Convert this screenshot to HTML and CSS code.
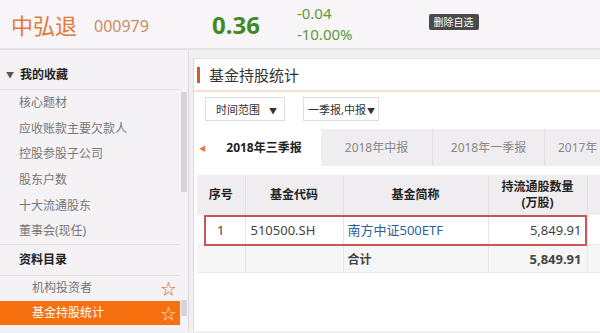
FILE: index.html
```html
<!DOCTYPE html>
<html lang="zh">
<head>
    <meta charset="UTF-8">
    <title>中弘退 基金持股统计</title>
    <link rel="stylesheet" href="styles.css">
</head>
<body>
    <div class="header">
        <span class="stock-name">中弘退</span>
        <span class="stock-code">000979</span>
        <span class="price">0.36</span>
        <div class="change">
            <span>-0.04</span>
            <span>-10.00%</span>
        </div>
        <button class="btn-del" type="button">删除自选</button>
    </div>

    <div class="layout">
        <div class="sidebar">
            <div class="menu">
                <div class="menu-head"><span class="caret">&#9660;</span>我的收藏</div>
                <div class="menu-item">核心题材</div>
                <div class="menu-item">应收账款主要欠款人</div>
                <div class="menu-item">控股参股子公司</div>
                <div class="menu-item">股东户数</div>
                <div class="menu-item">十大流通股东</div>
                <div class="menu-item">董事会(现任)</div>
                <div class="menu-group">资料目录</div>
                <div class="menu-sub">机构投资者<span class="star">&#9734;</span></div>
                <div class="menu-sub active">基金持股统计<span class="star">&#9734;</span></div>
            </div>
            <div class="scroll"><div class="thumb"></div><div class="thumb-low"></div></div>
        </div>

        <div class="main">
            <div class="title">基金持股统计</div>

            <div class="filters">
                <div class="select wide">时间范围 <span class="arrow">&#9660;</span></div>
                <div class="select">一季报,中报<span class="arrow">&#9660;</span></div>
            </div>

            <div class="tabs">
                <span class="tab-prev">&#9664;</span>
                <div class="tab active">2018年三季报</div>
                <div class="tab">2018年中报</div>
                <div class="tab">2018年一季报</div>
                <div class="tab last">2017年</div>
            </div>

            <div class="table-wrap">
                <table class="grid">
                    <colgroup>
                        <col style="width: 48px">
                        <col style="width: 98px">
                        <col style="width: 145px">
                        <col style="width: 99px">
                        <col style="width: 20px">
                    </colgroup>
                    <tr class="head">
                        <th class="c-no">序号</th>
                        <th class="c-code">基金代码</th>
                        <th class="c-name">基金简称</th>
                        <th class="c-num"><span class="th-line">持流通股数量</span><span class="th-line">(万股)</span></th>
                        <th class="c-more"></th>
                    </tr>
                    <tr class="row">
                        <td class="c-no">1</td>
                        <td class="c-code">510500.SH</td>
                        <td class="c-name"><span class="link">南方中证500ETF</span></td>
                        <td class="c-num">5,849.91</td>
                        <td class="c-more"></td>
                    </tr>
                    <tr class="row total">
                        <td class="c-no"></td>
                        <td class="c-code"></td>
                        <td class="c-name">合计</td>
                        <td class="c-num">5,849.91</td>
                        <td class="c-more"></td>
                    </tr>
                </table>
                <div class="mark"></div>
            </div>
        </div>
    </div>
</body>
</html>
```

FILE: styles.css
```css
body{
    margin: 0;
    width: 600px;
    height: 333px;
    overflow: hidden;
    background: #f1eff1;
    font-family: "Noto Sans", "Noto Sans CJK SC", sans-serif;
    color: #333;
}

/*****
header
******/
.header{
    height: 50px;
    display: flex;
    align-items: center;
    background: #f7f5f7;
    border-bottom: 2px solid #e3e1e3;
    box-sizing: border-box;
}

.stock-name{
    margin-left: 11px;
    font-size: 22px;
    color: #e07c3c;
}

.stock-code{
    margin-left: 17px;
    margin-top: 3px;
    font-size: 16px;
    color: #c98d62;
}

.price{
    margin-left: 63px;
    font-size: 24px;
    font-weight: bold;
    color: #3f8a22;
}

.change{
    margin-left: 37px;
    display: flex;
    flex-direction: column;
    font-size: 15px;
    line-height: 21px;
    color: #5a9a3a;
}

.btn-del{
    margin-left: 76px;
    margin-bottom: 4px;
    height: 16px;
    padding: 0 5px;
    border: none;
    border-radius: 2px;
    background: #4a4a4a;
    color: #fff;
    font-family: inherit;
    font-size: 10px;
    line-height: 16px;
}

/*****
layout
******/
.layout{
    display: flex;
    height: 281px;
}

.sidebar{
    width: 189px;
    display: flex;
    background: #f4f2f4;
    border-right: 1px solid #dcdadc;
    box-sizing: border-box;
    padding-top: 11px;
}

.menu{
    width: 181px;
}

.menu-head{
    height: 28px;
    line-height: 28px;
    font-size: 12px;
    font-weight: bold;
    color: #222;
    border-bottom: 1px solid #e2e0e2;
}

.caret{
    display: inline-block;
    margin: 0 6px;
    font-size: 8px;
    color: #555;
    vertical-align: 1px;
}

.menu-item{
    height: 25.7px;
    line-height: 25.7px;
    padding-left: 19px;
    font-size: 12px;
    color: #777;
}

.menu-group{
    height: 30px;
    line-height: 30px;
    padding-left: 19px;
    font-size: 12px;
    font-weight: bold;
    color: #222;
    border-top: 1px solid #e2e0e2;
    border-bottom: 1px solid #e2e0e2;
}

.menu-sub{
    display: flex;
    justify-content: space-between;
    height: 24px;
    line-height: 24px;
    padding: 0 4px 0 32px;
    font-size: 12px;
    color: #777;
}

.menu-sub.active{
    margin-top: 1px;
    background: #f6700f;
    color: #fff;
}

.star{
    font-size: 15px;
    color: #d9652a;
}

.menu-sub.active .star{
    color: #fbe0c8;
}

.scroll{
    width: 8px;
    display: flex;
    flex-direction: column;
    align-items: center;
}

.thumb{
    margin-top: 31px;
    width: 6px;
    height: 100px;
    background: #d6d4d6;
}

.thumb-low{
    margin-top: 108px;
    width: 6px;
    height: 16px;
    background: #d6d4d6;
}

/*****
main
******/
.main{
    flex: 1;
    margin: 8px 0 0 4px;
    background: #fff;
    border-left: 1px solid #dcdadc;
    border-top: 1px solid #e6e4e6;
}

.title{
    height: 31px;
    display: flex;
    align-items: center;
    padding-left: 3px;
    font-size: 15px;
    color: #333;
    border-bottom: 2px solid #f7e1d1;
}

.title::before{
    content: "";
    width: 3px;
    height: 16px;
    background: #d75a2a;
    margin-right: 9px;
}

.filters{
    display: flex;
    gap: 18px;
    padding: 5px 0 0 11px;
    height: 29px;
}

.select{
    height: 24px;
    line-height: 24px;
    padding: 0 0 0 4px;
    width: 76px;
    border: 1px solid #dedcde;
    box-sizing: border-box;
    font-size: 11px;
    color: #333;
    white-space: nowrap;
}

.select.wide{
    width: 80px;
    padding-left: 10px;
}

.arrow{
    font-size: 8px;
    margin-left: 1px;
}

.select.wide .arrow{
    margin-left: 6px;
}

.tabs{
    margin-top: 3px;
    height: 37px;
    display: flex;
    background: #efedef;
    position: relative;
}

.tab{
    width: 111px;
    line-height: 37px;
    text-align: center;
    font-size: 12px;
    color: #888;
    border-right: 1px solid #e0dee0;
}

.tab.active{
    width: 127px;
    background: #fff;
    color: #222;
    font-weight: bold;
    border-right: none;
    padding-left: 13px;
    box-sizing: border-box;
}

.tab.last{
    text-align: left;
    padding-left: 13px;
    border-right: none;
}

.tab-prev{
    position: absolute;
    left: 5px;
    top: 14px;
    font-size: 7px;
    color: #e07b3a;
}

.table-wrap{
    position: relative;
    margin-top: 9px;
    margin-left: 3px;
}

.grid{
    border-collapse: collapse;
    table-layout: fixed;
    width: 410px;
    font-size: 12px;
}

.grid th{
    height: 40px;
    padding: 0;
    background: #efedef;
    font-weight: bold;
    color: #222;
    line-height: 16px;
    text-align: center;
    border-right: 1px solid #e2e0e2;
    white-space: nowrap;
}

.th-line{
    display: block;
}

.grid td{
    height: 29px;
    padding: 0;
    border-right: 1px solid #e6e4e6;
    border-bottom: 1px solid #ebe9eb;
    font-size: 13px;
    color: #444;
    white-space: nowrap;
}

.grid .total td{
    height: 27px;
    background: #f7f6f7;
}

td.c-no{ text-align: center; }
td.c-code{ padding-left: 5px; }
td.c-name{ padding-left: 4px; }
td.c-num{ text-align: right; padding-right: 5px; }

.grid .c-more{
    border-right: none;
}

.link{
    color: #2b5f9e;
}

.total .c-name{
    font-size: 12px;
    font-weight: bold;
}

.total .c-num{
    font-weight: bold;
}

.mark{
    position: absolute;
    left: 7px;
    top: 40px;
    width: 383px;
    height: 31px;
    border: 2px solid #c9575a;
    box-sizing: border-box;
}
```
